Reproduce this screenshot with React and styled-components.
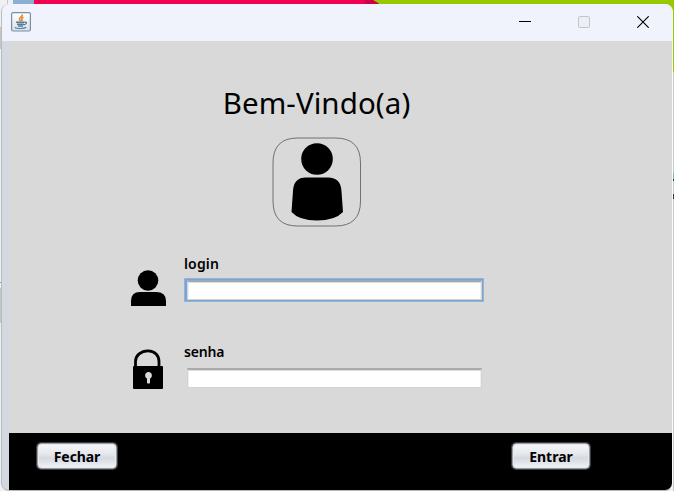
import React from "react";
import styled, { createGlobalStyle } from "styled-components";

const GlobalStyle = createGlobalStyle`
  * { box-sizing: border-box; }
  body { margin: 0; overflow: hidden; }
`;

const Desktop = styled.div`
  display: grid;
  grid-template: 491px / 674px;
  font-family: "Noto Sans", "Open Sans", sans-serif;
  color: #000;
`;

const Backdrop = styled.svg`
  grid-area: 1 / 1;
  display: block;
`;

const Window = styled.main`
  grid-area: 1 / 1;
  z-index: 1;
  display: grid;
  grid-template-rows: 37px 1fr;
  width: 672px;
  height: 487px;
  margin: 4px 0 0 1px;
  border-left: 1px solid #b9bbc0;
  border-right: 1px solid #fafafa;
  border-bottom: 1px solid #b8bac0;
  border-radius: 8px;
  overflow: hidden;
  background: #d4d8e1;
`;

const TitleBar = styled.header`
  display: flex;
  align-items: center;
  justify-content: space-between;
  padding: 0 23px 1px 9px;
  background: #f0f3fb;
  svg { display: block; }
`;

const WindowControls = styled.div`
  display: flex;
  gap: 47px;
`;

const Client = styled.div`
  display: grid;
  grid-template-rows: 392px 1fr;
  margin-left: 7px;
  background: #d9d9d9;
`;

const LoginPanel = styled.section`
  display: flex;
  flex-direction: column;
`;

const Welcome = styled.div`
  display: flex;
  flex-direction: column;
  align-items: center;
  padding: 42px 48px 0 0;
`;

const Title = styled.h1`
  margin: 0;
  height: 40px;
  line-height: 40px;
  font-size: 29.5px;
  font-weight: 400;
  letter-spacing: 0.08px;
  white-space: nowrap;
`;

const Avatar = styled.svg`
  display: block;
  margin-top: 14px;
`;

const Form = styled.div`
  display: flex;
  flex-direction: column;
  margin: 27px 0 0 121px;
`;

const FieldRow = styled.label`
  display: grid;
  grid-template-columns: 54px 300px;
  height: 88px;
`;

const FieldIcon = styled.svg`
  display: block;
  margin-top: ${(p) => p.$top};
`;

const FieldBody = styled.span`
  display: flex;
  flex-direction: column;
`;

const Caption = styled.span`
  height: 20px;
  line-height: 20px;
  font-size: 14px;
  font-weight: 600;
  letter-spacing: ${(p) => p.$spacing};
`;

const InputFrame = styled.span`
  display: block;
  width: 300px;
  height: 24px;
  margin-top: 4px;
  padding: 1px 1px 1px 2px;
  background: ${(p) => (p.$focused ? "#78a5d1" : "transparent")};
  border: 1px solid ${(p) => (p.$focused ? "#92b4d5" : "transparent")};
`;

const Input = styled.input`
  display: block;
  width: 295px;
  height: 20px;
  margin: 0;
  padding: 0 4px;
  border: 1px solid #d0d2d4;
  border-top: 2px solid ${(p) => (p.$focused ? "#9caab7" : "#aaa")};
  border-radius: 0;
  outline: none;
  background: #fff;
  box-shadow: inset 0 1px #dedede, inset 1px 0 #f0f0f0, inset -1px 0 #f0f0f0;
`;

const Footer = styled.footer`
  display: flex;
  align-items: flex-start;
  justify-content: space-between;
  padding: 10px 82px 0 28px;
  background: #000;
`;

const ActionButton = styled.button`
  width: ${(p) => p.$width};
  height: 26px;
  padding: 1px 0 0;
  border: 1px solid #989ba0;
  border-radius: 4px;
  background: linear-gradient(#f6f7f9, #e5e8ec 40%, #d5d9e0 60%, #f2f5f9);
  box-shadow: inset 0 0 0 1px #e6e9ee, 0 0 0 1px #3a3c3f;
  font: 700 14px/23px "Noto Sans", sans-serif;
  letter-spacing: ${(p) => p.$spacing};
  color: #000;
`;

function JavaIcon() {
  return (
    <svg width="20" height="20" viewBox="0 0 20 20" fill="none">
      <defs>
        <linearGradient id="tile" x2="0" y2="1">
          <stop stopColor="#fff" />
          <stop offset="1" stopColor="#d8e0e7" />
        </linearGradient>
      </defs>
      <rect x=".6" y=".6" width="18.8" height="18.4" rx="1.5" fill="url(#tile)" stroke="#7390a8" strokeWidth="1.2" />
      <path d="M11 2.500c1.500 2-3.500 3-2.500 5l1.500 1.700M12.500 5.300c-2.500 1-2 2-1 3.700" stroke="#ee8c35" strokeWidth="1.7" />
      <path d="M5 10.200h8.500M6 12.200h7M7 14h5" stroke="#527b9e" strokeWidth="1.5" />
      <path d="M13.500 10.200c3-.4 2.500 2.200-.8 2.600M3.800 15.500c2.200 1.400 9 1.300 11.500-.2" stroke="#527b9e" strokeWidth="1.2" />
    </svg>
  );
}

function Field({ caption, spacing, focused, type, iconTop, children }) {
  return (
    <FieldRow>
      <FieldIcon $top={iconTop} width="38" height="46" viewBox="0 0 38 46">{children}</FieldIcon>
      <FieldBody>
        <Caption $spacing={spacing}>{caption}</Caption>
        <InputFrame $focused={focused}>
          <Input $focused={focused} type={type} />
        </InputFrame>
      </FieldBody>
    </FieldRow>
  );
}

export default function App() {
  return (
    <>
      <GlobalStyle />
      <Desktop>
        <Backdrop width="674" height="491" viewBox="0 0 674 491" aria-hidden="true">
          <path fill="#eef0f2" d="M0 0h674v491H0z" />
          <path fill="#c6c6c6" d="M7 0h1v5H7zM0 27h2v22H0zM0 288h2v35H0z" />
          <path fill="#999" d="M0 282h2v1H0z" />
          <path fill="#8aafd3" d="M13 0h21v5H13z" />
          <path fill="#f00050" d="M34 0h345v5H34z" />
          <path fill="#d00047" d="M365 0h9l5 4h-14z" />
          <path fill="#96c900" d="M373 0h301v72h-2V12L664 4H380z" />
          <path fill="#c6c8ca" d="M673 72h1v419h-1z" />
          <path fill="#78b9d0" d="M673 173h1v6h-1z" />
          <path fill="#343941" d="M673 179h1v2h-1zM673 194h1v5h-1z" />
        </Backdrop>
        <Window>
          <TitleBar>
            <JavaIcon />
            <WindowControls>
              <svg width="12" height="12" viewBox="0 0 12 12"><path d="M0 5.500h12" stroke="#000" /></svg>
              <svg width="12" height="12" viewBox="0 0 12 12"><rect x=".5" y=".5" width="11" height="11" rx="1" fill="#eceef3" stroke="#c3c5cb" /></svg>
              <svg width="12" height="12" viewBox="0 0 12 12"><path d="m.3.3 11.400 11.400m0-11.400L.3 11.700" stroke="#000" strokeWidth="1.15" /></svg>
            </WindowControls>
          </TitleBar>
          <Client>
            <LoginPanel>
              <Welcome>
                <Title>Bem-Vindo(a)</Title>
                <Avatar width="90" height="90" viewBox="0 0 90 90">
                  <path d="M25.500 1h38Q88.500 1 88.500 26v38q0 25-25 25h-38Q1 89 1 64V26Q1 1 25.500 1z" fill="none" stroke="#707070" />
                  <circle cx="45" cy="22" r="15.800" />
                  <path d="M34 40.500h22q13 0 13.500 14L71 75q-8 8.500-26 8.500T19.500 75L21 54q.5-13.500 13-13.500z" />
                </Avatar>
              </Welcome>
              <Form>
                <Field caption="login" spacing="0.15px" focused type="text" iconTop="13px">
                  <circle cx="18" cy="13.500" r="10.300" />
                  <path d="M10 25h16q10 0 10 9v5H1v-5q0-9 9-9z" />
                </Field>
                <Field caption="senha" spacing="-0.15px" type="password" iconTop="3px">
                  <path d="M5.500 22v-5.500C5.500 10.500 11 5.800 18 5.800S29 10.500 29 16.500V22" fill="none" stroke="#000" strokeWidth="2.800" />
                  <rect x="3" y="21" width="30" height="23" rx="1" />
                  <path d="M17 38v-4.500a3.400 3.400 0 1 1 3 0V38q-1.500 1-3 0z" fill="#d9d9d9" />
                </Field>
              </Form>
            </LoginPanel>
            <Footer>
              <ActionButton type="button" $width="80px" $spacing="-0.1px">Fechar</ActionButton>
              <ActionButton type="button" $width="78px" $spacing="0">Entrar</ActionButton>
            </Footer>
          </Client>
        </Window>
      </Desktop>
    </>
  );
}
